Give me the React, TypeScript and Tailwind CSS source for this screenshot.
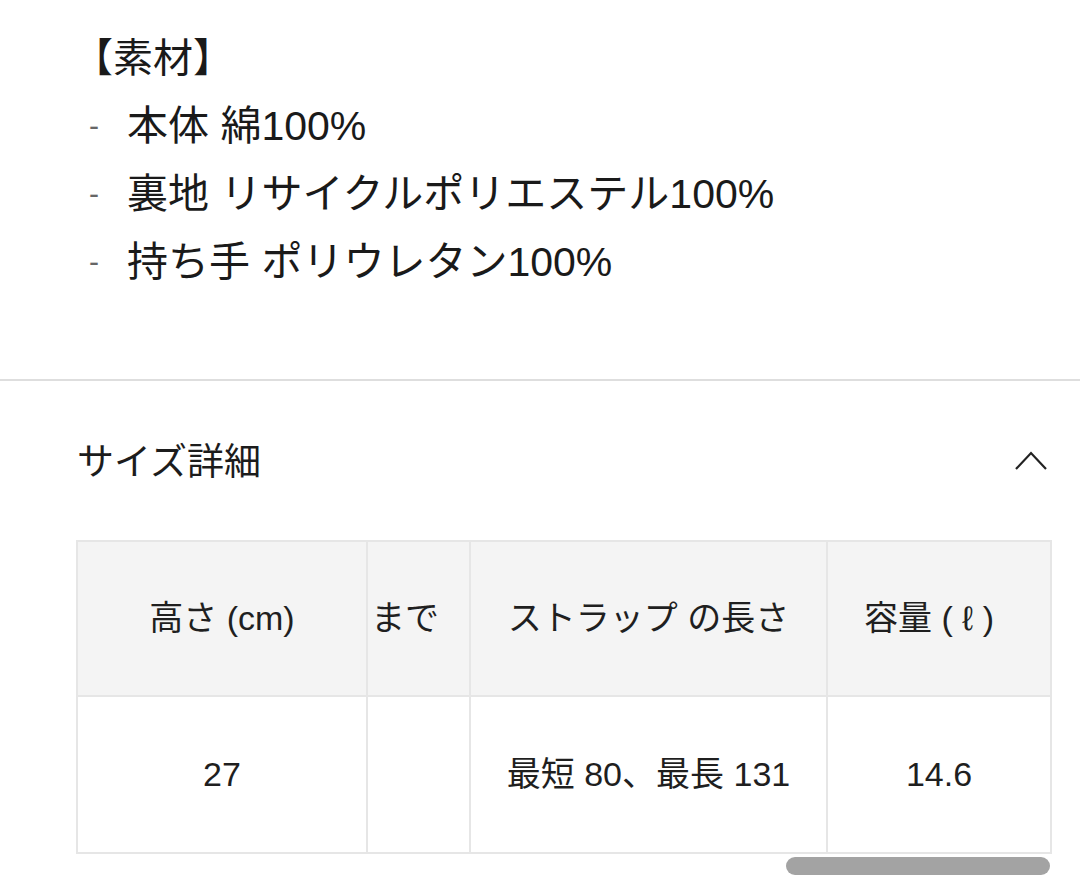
import React from "react";

const font = { fontFamily: '"Liberation Sans", "Noto Sans CJK JP", sans-serif' };

export default function App() {
  const items = ["本体 綿100%", "裏地 リサイクルポリエステル100%", "持ち手 ポリウレタン100%"];
  return (
    <div className="w-[1080px] h-[887px] bg-white text-[#1a1a1a] overflow-hidden" style={font}>
      <div className="pt-[24px]">
        <div className="pl-[73px] h-[68px] leading-[68px] text-[40px]">【素材】</div>
        {items.map((t) => (
          <div key={t} className="flex h-[68px] leading-[68px] text-[41px]">
            <span className="w-[127px] pl-[89px] text-[#666] text-[30px]">-</span>
            <span>{t}</span>
          </div>
        ))}
      </div>
      <div className="mt-[83px] h-[2px] bg-[#dedede]" />
      <div className="pt-[62px] pl-[77px] pr-[32px] flex items-center justify-between h-[102px]">
        <div className="text-[37px] leading-[40px] text-[#1c1c1c]">サイズ詳細</div>
        <svg width="34" height="20" viewBox="0 0 34 20" className="mt-[-4px]">
          <polyline points="2,18 17,2 32,18" fill="none" stroke="#222" strokeWidth="2.2" />
        </svg>
      </div>
      <div className="mt-[57px] ml-[76px] w-[974px]">
        <table className="border-collapse w-[974px] table-fixed text-[34px] text-[#1f1f1f]">
          <colgroup>
            <col className="w-[290px]" />
            <col className="w-[103px]" />
            <col className="w-[357px]" />
            <col className="w-[224px]" />
          </colgroup>
          <tbody>
            <tr className="h-[155px] bg-[#f4f4f4]">
              <td className="border-2 border-[#e6e6e6] text-center whitespace-nowrap">高さ (cm)</td>
              <td className="border-2 border-[#e6e6e6] text-left pl-[3px] whitespace-nowrap overflow-hidden">まで</td>
              <td className="border-2 border-[#e6e6e6] text-center whitespace-nowrap">ストラップ の長さ</td>
              <td className="border-2 border-[#e6e6e6] text-center pr-[20px] whitespace-nowrap">容量 ( ℓ )</td>
            </tr>
            <tr className="h-[157px] bg-white">
              <td className="border-2 border-[#e6e6e6] text-center">27</td>
              <td className="border-2 border-[#e6e6e6]"></td>
              <td className="border-2 border-[#e6e6e6] text-center whitespace-nowrap">最短 80、最長 131</td>
              <td className="border-2 border-[#e6e6e6] text-center">14.6</td>
            </tr>
          </tbody>
        </table>
        <div className="mt-[3px] ml-[710px] w-[264px] h-[18px] rounded-full bg-[#a3a3a3]" />
      </div>
    </div>
  );
}
